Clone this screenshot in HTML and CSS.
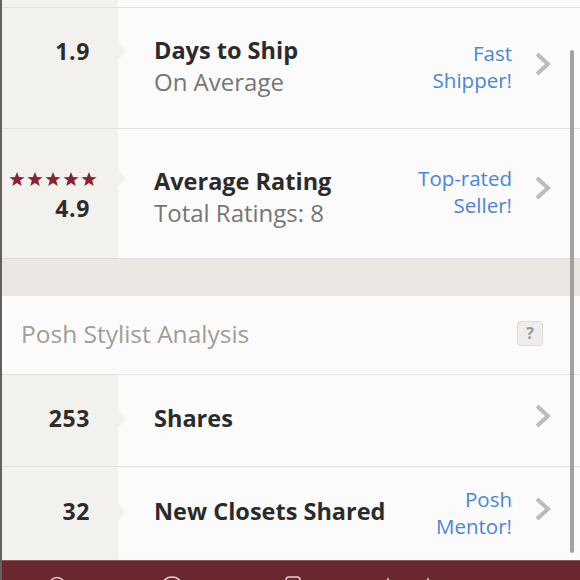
FILE: index.html
```html
<!DOCTYPE html>
<html lang="en">
<head>
    <meta charset="UTF-8">
    <meta name="viewport" content="width=device-width, initial-scale=1.0">
    <title>Seller Stats</title>
    <link rel="stylesheet" href="styles.css">
</head>
<body>
    <div class="page">
        <div class="row row-tail">
            <div class="stat"></div>
            <div class="info"></div>
        </div>

        <div class="row row-ship">
            <div class="stat">
                <span class="num">1.9</span>
            </div>
            <div class="info">
                <div class="text">
                    <div class="title">Days to Ship</div>
                    <div class="sub">On Average</div>
                </div>
                <div class="badge">Fast<br>Shipper!</div>
                <svg class="chev" width="18" height="26" viewBox="0 0 18 26"><path d="M3 3 L14 13 L3 23" fill="none" stroke="#bdbbb9" stroke-width="4"/></svg>
            </div>
        </div>

        <div class="row row-rating">
            <div class="stat">
                <div class="stars">
                    <svg width="88" height="16" viewBox="0 0 88 16">
                        <g fill="#8b2234">
                            <polygon points="8,1 10,6 15.5,6.2 11.2,9.6 12.7,15 8,11.9 3.3,15 4.8,9.6 0.5,6.2 6,6"/>
                            <polygon transform="translate(18,0)" points="8,1 10,6 15.5,6.2 11.2,9.6 12.7,15 8,11.9 3.3,15 4.8,9.6 0.5,6.2 6,6"/>
                            <polygon transform="translate(36,0)" points="8,1 10,6 15.5,6.2 11.2,9.6 12.7,15 8,11.9 3.3,15 4.8,9.6 0.5,6.2 6,6"/>
                            <polygon transform="translate(54,0)" points="8,1 10,6 15.5,6.2 11.2,9.6 12.7,15 8,11.9 3.3,15 4.8,9.6 0.5,6.2 6,6"/>
                            <polygon transform="translate(72,0)" points="8,1 10,6 15.5,6.2 11.2,9.6 12.7,15 8,11.9 3.3,15 4.8,9.6 0.5,6.2 6,6"/>
                        </g>
                    </svg>
                </div>
                <span class="num">4.9</span>
            </div>
            <div class="info">
                <div class="text">
                    <div class="title">Average Rating</div>
                    <div class="sub">Total Ratings: 8</div>
                </div>
                <div class="badge">Top-rated<br>Seller!</div>
                <svg class="chev" width="18" height="26" viewBox="0 0 18 26"><path d="M3 3 L14 13 L3 23" fill="none" stroke="#bdbbb9" stroke-width="4"/></svg>
            </div>
        </div>

        <div class="band"></div>

        <div class="section-head">
            <span>Posh Stylist Analysis</span>
            <span class="help">?</span>
        </div>

        <div class="row row-shares">
            <div class="stat">
                <span class="num">253</span>
            </div>
            <div class="info">
                <div class="text">
                    <div class="title">Shares</div>
                </div>
                <svg class="chev" width="18" height="26" viewBox="0 0 18 26"><path d="M3 3 L14 13 L3 23" fill="none" stroke="#bdbbb9" stroke-width="4"/></svg>
            </div>
        </div>

        <div class="row row-closets">
            <div class="stat">
                <span class="num">32</span>
            </div>
            <div class="info">
                <div class="text">
                    <div class="title">New Closets Shared</div>
                </div>
                <div class="badge">Posh<br>Mentor!</div>
                <svg class="chev" width="18" height="26" viewBox="0 0 18 26"><path d="M3 3 L14 13 L3 23" fill="none" stroke="#bdbbb9" stroke-width="4"/></svg>
            </div>
        </div>

        <div class="tabbar">
            <svg width="580" height="19" viewBox="0 0 580 19">
                <g fill="none" stroke="#e6cfd1" stroke-width="1.5">
                    <path d="M49 19 Q55 14 61 19"/>
                    <circle cx="170" cy="27" r="11"/>
                    <rect x="284" y="16" width="14" height="10" rx="3"/>
                    <path d="M386 17 L386 19"/>
                    <path d="M426 17 L426 19"/>
                </g>
            </svg>
        </div>

        <div class="scrollbar"></div>
    </div>
</body>
</html>
```

FILE: styles.css
```css
body {
    margin: 0;
    background: #fcfbfb;
    font-family: "Open Sans", sans-serif;
    overflow: hidden;
}

.page {
    position: relative;
    width: 578px;
    height: 580px;
    border-left: 2px solid #66605c;
    display: flex;
    flex-direction: column;
}

.row {
    display: flex;
    border-bottom: 1px solid #e3e0de;
}

.row-tail { height: 7px; }
.row-ship { height: 120px; }
.row-rating { height: 129px; border-bottom: none; }
.row-shares { height: 91px; }
.row-closets { height: 93px; border-bottom: none; }

.stat {
    position: relative;
    width: 88px;
    padding-right: 28px;
    background: #f3f1ee;
    display: flex;
    flex-direction: column;
    align-items: flex-end;
    justify-content: center;
}

.row-ship .stat { padding-bottom: 34px; }
.row-rating .stat { padding-top: 9px; }
.row-shares .stat { padding-bottom: 6px; }
.row-closets .stat { padding-bottom: 5px; }

.stat::after {
    content: "";
    position: absolute;
    right: -8px;
    top: 50%;
    margin-top: -11px;
    border-style: solid;
    border-width: 9px 0 9px 8px;
    border-color: transparent transparent transparent #f3f1ee;
}

.row-ship .stat::after { margin-top: -26px; }
.row-rating .stat::after { margin-top: -24px; }
.row-tail .stat::after { display: none; }

.num {
    font-size: 23px;
    font-weight: 700;
    color: #2d2c2c;
    letter-spacing: 0.6px;
}

.stars {
    margin-right: -7px;
    margin-bottom: 5px;
    line-height: 0;
}

.info {
    flex: 1;
    display: flex;
    align-items: center;
    padding: 0 28px 2px 36px;
}

.row-ship .info { padding-bottom: 4px; }
.row-rating .info { padding-top: 8px; padding-bottom: 0; }
.row-shares .info { padding-bottom: 6px; }
.row-closets .info { padding-bottom: 5px; }

.text { flex: 1; }

.title {
    font-size: 23.5px;
    font-weight: 700;
    color: #2b2b2b;
    line-height: 32px;
}

.sub {
    font-size: 24px;
    color: #767676;
    line-height: 32px;
}

.badge {
    text-align: right;
    font-size: 20.5px;
    line-height: 27px;
    color: #4b86d6;
    margin: 3px 22px 0 0;
}

.chev {
    display: block;
    margin-bottom: 4px;
}

.row-rating .badge { margin: 0 22px 10px 0; }
.row-rating .chev { margin-bottom: 18px; }

.band {
    height: 38px;
    background: #ebe8e3;
    border-top: 1px solid #e0ddd8;
}

.section-head {
    height: 79px;
    display: flex;
    align-items: center;
    justify-content: space-between;
    padding: 0 37px 4px 19px;
    box-sizing: border-box;
    border-bottom: 1px solid #e3e0de;
    font-size: 24.5px;
    color: #a19d99;
}

.help {
    width: 24px;
    height: 23px;
    border: 1px solid #dcd9d6;
    border-radius: 4px;
    background: #efedeb;
    color: #9b9794;
    font-size: 16px;
    font-weight: 700;
    text-align: center;
    line-height: 23px;
}

.tabbar {
    flex: 1;
    background: #6a272e;
    border-top: 1px solid #8a5a5e;
    line-height: 0;
}

.scrollbar {
    position: absolute;
    right: 6px;
    top: 50px;
    width: 4px;
    height: 503px;
    border-radius: 2px;
    background: #a3a2a1;
}
```
